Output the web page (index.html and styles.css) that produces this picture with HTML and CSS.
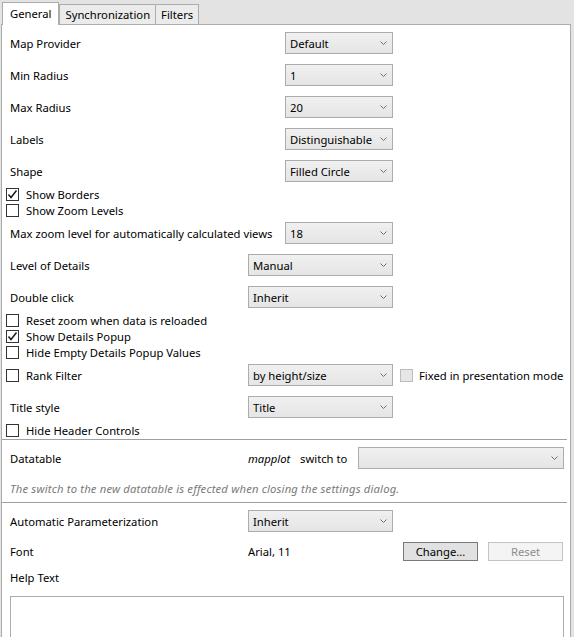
FILE: index.html
```html
<!DOCTYPE html>
<html>
<head>
<meta charset="utf-8">
<link rel="stylesheet" href="styles.css">
</head>
<body>
<div class="tabs">
  <div class="tab active">General</div>
  <div class="tab">Synchronization</div>
  <div class="tab">Filters</div>
</div>
<div class="panel">
  <div class="row gap10"><span class="lbl wide">Map Provider</span><div class="combo w107"><span>Default</span><svg class="chev" width="7" height="4" viewBox="0 0 7 4"><polyline points="0.5,0.5 3.5,3.5 6.5,0.5"/></svg></div></div>
  <div class="row gap10"><span class="lbl wide">Min Radius</span><div class="combo w107"><span>1</span><svg class="chev" width="7" height="4" viewBox="0 0 7 4"><polyline points="0.5,0.5 3.5,3.5 6.5,0.5"/></svg></div></div>
  <div class="row gap10"><span class="lbl wide">Max Radius</span><div class="combo w107"><span>20</span><svg class="chev" width="7" height="4" viewBox="0 0 7 4"><polyline points="0.5,0.5 3.5,3.5 6.5,0.5"/></svg></div></div>
  <div class="row gap10"><span class="lbl wide">Labels</span><div class="combo w107"><span>Distinguishable</span><svg class="chev" width="7" height="4" viewBox="0 0 7 4"><polyline points="0.5,0.5 3.5,3.5 6.5,0.5"/></svg></div></div>
  <div class="row gap4"><span class="lbl wide">Shape</span><div class="combo w107"><span>Filled Circle</span><svg class="chev" width="7" height="4" viewBox="0 0 7 4"><polyline points="0.5,0.5 3.5,3.5 6.5,0.5"/></svg></div></div>
  <div class="check"><span class="box"><svg width="11" height="11" viewBox="0 0 11 11"><path d="M1.5 5.5 L4 8.5 L9.5 1.5"/></svg></span><span>Show Borders</span></div>
  <div class="check gap4"><span class="box"></span><span>Show Zoom Levels</span></div>
  <div class="row gap10"><span class="lbl wide">Max zoom level for automatically calculated views</span><div class="combo w107"><span>18</span><svg class="chev" width="7" height="4" viewBox="0 0 7 4"><polyline points="0.5,0.5 3.5,3.5 6.5,0.5"/></svg></div></div>
  <div class="row gap10"><span class="lbl">Level of Details</span><div class="combo w144"><span>Manual</span><svg class="chev" width="7" height="4" viewBox="0 0 7 4"><polyline points="0.5,0.5 3.5,3.5 6.5,0.5"/></svg></div></div>
  <div class="row gap4"><span class="lbl">Double click</span><div class="combo w144"><span>Inherit</span><svg class="chev" width="7" height="4" viewBox="0 0 7 4"><polyline points="0.5,0.5 3.5,3.5 6.5,0.5"/></svg></div></div>
  <div class="check"><span class="box"></span><span>Reset zoom when data is reloaded</span></div>
  <div class="check"><span class="box"><svg width="11" height="11" viewBox="0 0 11 11"><path d="M1.5 5.5 L4 8.5 L9.5 1.5"/></svg></span><span>Show Details Popup</span></div>
  <div class="check gap4"><span class="box"></span><span>Hide Empty Details Popup Values</span></div>
  <div class="row gap10 rowcheck"><span class="lbl lblcheck"><span class="box"></span><span>Rank Filter</span></span><div class="combo w144"><span>by height/size</span><svg class="chev" width="7" height="4" viewBox="0 0 7 4"><polyline points="0.5,0.5 3.5,3.5 6.5,0.5"/></svg></div><span class="box disabled"></span><span class="fixed">Fixed in presentation mode</span></div>
  <div class="row gap4"><span class="lbl">Title style</span><div class="combo w144"><span>Title</span><svg class="chev" width="7" height="4" viewBox="0 0 7 4"><polyline points="0.5,0.5 3.5,3.5 6.5,0.5"/></svg></div></div>
  <div class="check"><span class="box"></span><span>Hide Header Controls</span></div>
  <div class="sep sep1"></div>
  <div class="row"><span class="lbl">Datatable</span><span class="dtname">mapplot</span><span class="switch">switch to</span><div class="combo w205"><span></span><svg class="chev" width="7" height="4" viewBox="0 0 7 4"><polyline points="0.5,0.5 3.5,3.5 6.5,0.5"/></svg></div></div>
  <div class="hint">The switch to the new datatable is effected when closing the settings dialog.</div>
  <div class="sep sep2"></div>
  <div class="row gap10"><span class="lbl">Automatic Parameterization</span><div class="combo w144"><span>Inherit</span><svg class="chev" width="7" height="4" viewBox="0 0 7 4"><polyline points="0.5,0.5 3.5,3.5 6.5,0.5"/></svg></div></div>
  <div class="row fontrow"><span class="lbl">Font</span><span class="fontval">Arial, 11</span><button class="btn">Change...</button><button class="btn disabled">Reset</button></div>
  <div class="helplbl">Help Text</div>
  <div class="textarea"></div>
</div>
</body>
</html>
```

FILE: styles.css
```css
html, body {
  margin: 0;
  padding: 0;
}
body {
  background: #e3e3e3;
  font-family: "Noto Sans", "Open Sans", sans-serif;
  font-size: 11.25px;
  color: #000;
  width: 574px;
  height: 637px;
  overflow: hidden;
}
.tabs {
  display: flex;
  align-items: flex-end;
  height: 24px;
  padding-left: 2px;
}
.tab {
  box-sizing: border-box;
  height: 20px;
  border: 1px solid #acacac;
  border-bottom: none;
  background: #ebebeb;
  display: flex;
  align-items: center;
  padding: 0 5px 1px 5px;
  margin-left: -1px;
}
.tab.active {
  height: 23px;
  margin-bottom: -1px;
  margin-left: 0;
  background: #fff;
  padding: 0 7px 2px 7px;
  position: relative;
  z-index: 1;
  margin-right: 1px;
}
.panel {
  box-sizing: border-box;
  margin-left: 1px;
  width: 570px;
  height: 613px;
  background: #fff;
  border: 1px solid #acacac;
  border-bottom: none;
  padding-top: 7px;
  display: flex;
  flex-direction: column;
}
.row {
  display: flex;
  align-items: center;
  height: 22px;
  padding-left: 8px;
  flex-shrink: 0;
}
.gap10 { margin-bottom: 10px; }
.gap4 { margin-bottom: 4px; }
.lbl {
  width: 238px;
  flex-shrink: 0;
  white-space: nowrap;
}
.lbl.wide { width: 275px; }
.combo {
  box-sizing: border-box;
  height: 22px;
  border: 1px solid #acacac;
  background: linear-gradient(#f0f0f0, #e5e5e5);
  display: flex;
  align-items: center;
  justify-content: space-between;
  padding: 0 5px 0 4px;
  flex-shrink: 0;
}
.w107 { width: 108px; }
.w144 { width: 145px; }
.w205 { width: 206px; }
.chev polyline {
  fill: none;
  stroke: #707070;
  stroke-width: 1;
}
.check {
  display: flex;
  align-items: center;
  height: 16px;
  padding-left: 4px;
  flex-shrink: 0;
}
.box {
  box-sizing: border-box;
  width: 13px;
  height: 13px;
  border: 1px solid #333;
  background: #fff;
  margin-right: 7px;
  display: inline-flex;
  align-items: center;
  justify-content: center;
  flex-shrink: 0;
}
.box svg path {
  fill: none;
  stroke: #1a1a1a;
  stroke-width: 1.5;
}
.box.disabled {
  background: #e6e6e6;
  border-color: #bcbcbc;
  margin-left: 7px;
  margin-right: 6px;
}
.rowcheck { padding-left: 4px; }
.lblcheck {
  width: 242px;
  display: flex;
  align-items: center;
}
.fixed { white-space: nowrap; }
.sep {
  height: 1px;
  background: #a0a0a0;
  margin-right: 3px;
  flex-shrink: 0;
}
.sep1 { margin-top: 1px; margin-bottom: 7px; }
.dtname {
  font-style: italic;
  width: 52px;
  flex-shrink: 0;
}
.switch { width: 58px; flex-shrink: 0; white-space: nowrap; }
.hint {
  margin-top: 12px;
  height: 16px;
  line-height: 16px;
  padding-left: 8px;
  font-style: italic;
  color: #7a7a7a;
  letter-spacing: 0.17px;
  flex-shrink: 0;
  white-space: nowrap;
}
.sep2 { margin-top: 5px; margin-bottom: 7px; }
.fontrow { height: 19px; }
.fontval { width: 155px; flex-shrink: 0; }
.btn {
  box-sizing: border-box;
  width: 75px;
  height: 19px;
  font: inherit;
  color: #000;
  background: #e1e1e1;
  border: 1px solid #7a7a7a;
  padding: 0;
  margin: 0 10px 0 0;
}
.btn.disabled {
  background: #f4f4f4;
  border-color: #c4c4c4;
  color: #8d8d8d;
  margin-right: 0;
}
.helplbl {
  margin-top: 9px;
  height: 16px;
  line-height: 16px;
  padding-left: 8px;
  flex-shrink: 0;
}
.textarea {
  box-sizing: border-box;
  margin: 10px 0 0 8px;
  width: 554px;
  height: 60px;
  border: 1px solid #acacac;
  background: #fff;
  flex-shrink: 0;
}
```
